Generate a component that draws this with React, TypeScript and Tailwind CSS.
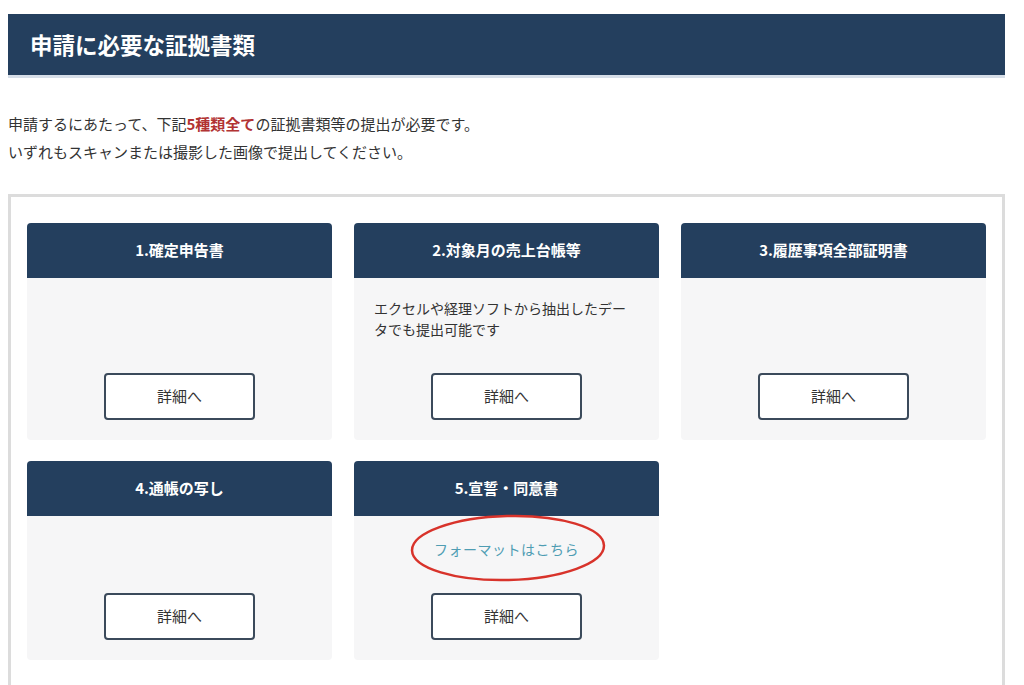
const docs = [
  { title: '1.確定申告書' },
  { title: '2.対象月の売上台帳等', note: 'エクセルや経理ソフトから抽出したデータでも提出可能です' },
  { title: '3.履歴事項全部証明書' },
  { title: '4.通帳の写し' },
  { title: '5.宣誓・同意書', link: 'フォーマットはこちら' },
];

function DocCard({ title, note, link }: { title: string; note?: string; link?: string }) {
  return (
    <div className="flex flex-col rounded-[4px] overflow-hidden bg-[#f6f6f7]">
      <div className="h-[55px] flex items-center justify-center bg-[#243f5e] text-white font-bold text-[15px]">
        {title}
      </div>
      <div className="flex-1 flex flex-col items-center px-5 pt-5 pb-5">
        {note && (
          <p className="self-stretch text-[14px] leading-[21px] text-[#333] mb-[33px]">{note}</p>
        )}
        {link && (
          <div className="relative mt-[3px] mb-[33px]">
            <a className="block text-[14px] leading-[21px] text-[#4f9db3] tracking-[0.5px]">{link}</a>
            {/* red circle marking the link */}
            <svg
              className="absolute left-[-24px] top-[-28px] pointer-events-none"
              width="200"
              height="72"
              viewBox="0 0 200 72"
            >
              <ellipse
                cx="98"
                cy="37"
                rx="96"
                ry="32"
                transform="rotate(-1.5 98 37)"
                fill="none"
                stroke="#d8332b"
                strokeWidth="2.5"
              />
            </svg>
          </div>
        )}
        <button className="mt-auto w-[151px] h-[47px] rounded-[4px] border-2 border-[#3b4a5b] bg-white text-[15px] text-[#333]">
          詳細へ
        </button>
      </div>
    </div>
  );
}

export default function App() {
  return (
    <div
      className="w-[1024px] h-[685px] overflow-hidden bg-white text-[#333]"
      style={{ fontFamily: '"Noto Sans CJK JP", "Noto Sans", sans-serif' }}
    >
      <div className="pt-[14px] pl-[8px] pr-[19px]">
        {/* Section heading */}
        <div className="h-[61px] flex items-center bg-[#243f5e] pl-[22px] shadow-[0_3px_0_#d6dee8]">
          <h2 className="text-[22.5px] font-bold text-white">申請に必要な証拠書類</h2>
        </div>

        <div className="mt-[35px] text-[15px] leading-[28px]">
          <p>
            申請するにあたって、下記<span className="font-bold text-[#b23333]">5種類全て</span>の証拠書類等の提出が必要です。
          </p>
          <p>いずれもスキャンまたは撮影した画像で提出してください。</p>
        </div>

        {/* Document cards */}
        <div className="mt-[28px] border-[3px] border-[#dcdcdc] px-4 pt-[26px] pb-8">
          <div className="grid grid-cols-3 gap-x-[22px] gap-y-[21px]">
            {docs.map((d) => (
              <DocCard key={d.title} {...d} />
            ))}
          </div>
        </div>
      </div>
    </div>
  );
}
